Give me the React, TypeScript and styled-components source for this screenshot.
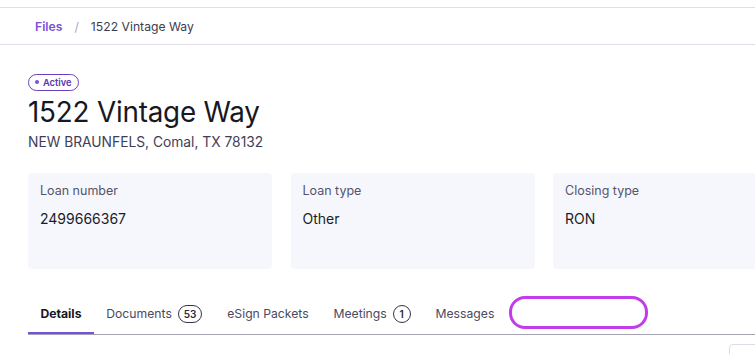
import styled, { createGlobalStyle } from "styled-components";

const GlobalStyle = createGlobalStyle`
  html, body {
    margin: 0;
    padding: 0;
    background: #ffffff;
    overflow: hidden;
  }
  body {
    font-family: Inter, "Liberation Sans", sans-serif;
    color: #1b1b26;
  }
`;

const Page = styled.div`
  width: 755px;
  height: 354px;
  padding-top: 7px;
  box-sizing: border-box;
  overflow: hidden;
`;

const Breadcrumbs = styled.nav`
  display: flex;
  align-items: center;
  gap: 12px;
  height: 36px;
  padding-left: 35px;
  border-top: 1px solid #dedde9;
  border-bottom: 1px solid #dedde9;
  font-size: 12.2px;
`;

const Crumb = styled.span<{ $link?: boolean }>`
  color: ${(p) => (p.$link ? "#7a4fd9" : "#3d3c4f")};
  font-weight: ${(p) => (p.$link ? 600 : 400)};
`;

const Slash = styled.span`
  color: #a9a8b8;
`;

const Header = styled.header`
  padding: 23px 28px 0;
`;

const StatusPill = styled.span`
  display: inline-flex;
  align-items: center;
  gap: 4px;
  height: 17px;
  padding: 0 6px;
  border: 1px solid #6a3fc4;
  border-radius: 9px;
  box-sizing: border-box;
  color: #5b34b2;
  font-size: 9.3px;
  font-weight: 600;

  &::before {
    content: "";
    width: 4px;
    height: 4px;
    border-radius: 50%;
    background: #7a4fd9;
  }
`;

const Title = styled.h1`
  margin: 3px 0 0;
  font-size: 27.8px;
  font-weight: 400;
  line-height: 36px;
  color: #181822;
  letter-spacing: -0.2px;
`;

const Subtitle = styled.p`
  margin: 4px 0 0;
  font-size: 13.8px;
  color: #3f3e58;
`;

const Cards = styled.div`
  display: grid;
  grid-template-columns: repeat(3, 244px);
  gap: 18.5px;
  margin: 23px 0 0 28px;
`;

const Card = styled.div`
  height: 96px;
  padding: 10px 12px;
  box-sizing: border-box;
  background: #f6f7fc;
  border-radius: 4px;
`;

const CardLabel = styled.div`
  font-size: 12.5px;
  color: #55546a;
  line-height: 16px;
`;

const CardValue = styled.div`
  margin-top: 11px;
  font-size: 14px;
  color: #1c1c28;
`;

const Tabs = styled.div`
  display: flex;
  align-items: center;
  margin: 26px 0 0 28px;
  border-bottom: 1px solid #a3a2b3;
  height: 39px;
`;

const Tab = styled.div<{ $active?: boolean }>`
  display: flex;
  align-items: center;
  gap: 6px;
  height: 100%;
  padding: 0 12.4px;
  box-sizing: border-box;
  font-size: 12.2px;
  font-weight: ${(p) => (p.$active ? 700 : 400)};
  color: ${(p) => (p.$active ? "#17161f" : "#4a4960")};
  border-bottom: 2px solid ${(p) => (p.$active ? "#7a4fd9" : "transparent")};
  margin-bottom: -1px;
`;

const Count = styled.span`
  display: inline-flex;
  align-items: center;
  justify-content: center;
  min-width: 18px;
  height: 18px;
  padding: 0 5px;
  box-sizing: border-box;
  border: 1px solid #34334a;
  border-radius: 9px;
  font-size: 10px;
  font-weight: 600;
  color: #2b2a3c;
`;

const Highlight = styled.div`
  width: 139px;
  height: 33px;
  margin-left: 2px;
  margin-top: -4px;
  box-sizing: border-box;
  border: 3px solid #c23ceb;
  border-radius: 16px;
`;

const Actions = styled.div`
  display: flex;
  justify-content: flex-end;
  padding-top: 9px;
  margin-right: -42px;
`;

const GhostButton = styled.div`
  width: 66px;
  height: 30px;
  border: 1px solid #dcdce6;
  border-radius: 4px;
`;

const details = [
  { label: "Loan number", value: "2499666367" },
  { label: "Loan type", value: "Other" },
  { label: "Closing type", value: "RON" },
];

export default function App() {
  return (
    <Page>
      <GlobalStyle />
      <Breadcrumbs>
        <Crumb $link>Files</Crumb>
        <Slash>/</Slash>
        <Crumb>1522 Vintage Way</Crumb>
      </Breadcrumbs>
      <Header>
        <StatusPill>Active</StatusPill>
        <Title>1522 Vintage Way</Title>
        <Subtitle>NEW BRAUNFELS, Comal, TX 78132</Subtitle>
      </Header>
      <Cards>
        {details.map((d) => (
          <Card key={d.label}>
            <CardLabel>{d.label}</CardLabel>
            <CardValue>{d.value}</CardValue>
          </Card>
        ))}
      </Cards>
      <Tabs>
        <Tab $active>Details</Tab>
        <Tab>
          Documents <Count>53</Count>
        </Tab>
        <Tab>eSign Packets</Tab>
        <Tab>
          Meetings <Count>1</Count>
        </Tab>
        <Tab>Messages</Tab>
        <Highlight />
      </Tabs>
      <Actions>
        <GhostButton />
      </Actions>
    </Page>
  );
}
